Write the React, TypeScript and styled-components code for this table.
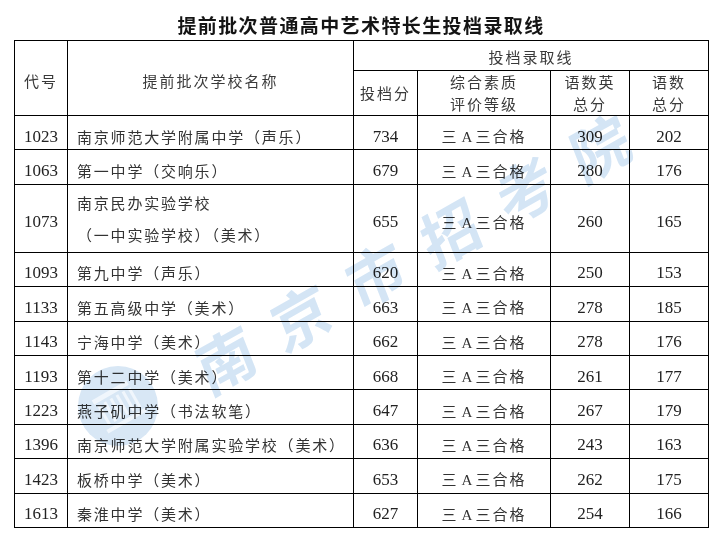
import styled, { createGlobalStyle } from "styled-components";

const GlobalStyle = createGlobalStyle`
  html, body {
    margin: 0;
    padding: 0;
    background: #fff;
  }
  body {
    font-family: "Liberation Serif", "Noto Sans CJK SC", serif;
    color: #2a2a2a;
  }
`;

const Page = styled.div`
  position: relative;
  width: 727px;
  height: 541px;
  padding-left: 14px;
  box-sizing: border-box;
  overflow: hidden;
`;

const Title = styled.h1`
  margin: 0;
  width: 694px;
  height: 40px;
  box-sizing: border-box;
  padding-top: 11px;
  line-height: 28px;
  text-align: center;
  font-family: "Noto Sans CJK SC", sans-serif;
  font-weight: 700;
  font-size: 19px;
  letter-spacing: 1.4px;
  color: #141414;
`;

const Table = styled.table`
  width: 695px;
  border-collapse: collapse;
  table-layout: fixed;
`;

const HeadRow = styled.tr<{ $h: number }>`
  height: ${(p) => p.$h}px;
`;

const Row = styled.tr<{ $double?: boolean }>`
  height: ${(p) => (p.$double ? 68 : 34.4)}px;
`;

const HeadCell = styled.th<{ $shift?: number }>`
  border: 1px solid #000;
  padding: ${(p) => p.$shift ?? 0}px 0 0;
  font-family: "Noto Sans CJK SC", sans-serif;
  font-weight: 400;
  font-size: 15px;
  line-height: 22px;
  letter-spacing: 2px;
  color: #3a3a3a;
  text-align: center;
  vertical-align: middle;
`;

const NumCell = styled.td`
  border: 1px solid #000;
  padding: 8px 0 0;
  font-family: "Liberation Serif", serif;
  font-size: 17px;
  line-height: 20px;
  color: #222;
  text-align: center;
  vertical-align: middle;
`;

const NameCell = styled.td<{ $lines?: number }>`
  border: 1px solid #000;
  padding: ${(p) => ((p.$lines ?? 1) > 1 ? 2 : 8)}px 0 0 9px;
  font-family: "Noto Sans CJK SC", sans-serif;
  font-size: 15px;
  line-height: ${(p) => ((p.$lines ?? 1) > 1 ? 32 : 20)}px;
  letter-spacing: 1.8px;
  color: #333;
  text-align: left;
  vertical-align: middle;
  white-space: nowrap;
`;

const GradeCell = styled.td`
  border: 1px solid #000;
  padding: 8px 0 0;
  font-family: "Noto Sans CJK SC", sans-serif;
  font-size: 15px;
  line-height: 20px;
  letter-spacing: 2px;
  color: #333;
  text-align: center;
  vertical-align: middle;
  white-space: nowrap;
`;

const Latin = styled.span`
  font-family: "Liberation Serif", serif;
  letter-spacing: 0;
  margin: 0 3px;
`;

const Watermark = styled.div`
  position: absolute;
  inset: 0;
  pointer-events: none;
  mix-blend-mode: multiply;
`;

const WatermarkText = styled.div`
  position: absolute;
  left: 195px;
  top: 326px;
  font-family: "Noto Sans CJK SC", sans-serif;
  font-weight: 700;
  font-size: 60px;
  line-height: 62px;
  letter-spacing: 26px;
  white-space: nowrap;
  color: #d4e5f5;
  transform-origin: 30px 31px;
  transform: rotate(-29.5deg) skewX(-8deg);
`;

const Logo = styled.svg`
  position: absolute;
  left: 76px;
  top: 364px;
`;

type Entry = {
  code: string;
  name: string[];
  score: string;
  three: string;
  two: string;
};

const entries: Entry[] = [
  { code: "1023", name: ["南京师范大学附属中学（声乐）"], score: "734", three: "309", two: "202" },
  { code: "1063", name: ["第一中学（交响乐）"], score: "679", three: "280", two: "176" },
  { code: "1073", name: ["南京民办实验学校", "（一中实验学校）（美术）"], score: "655", three: "260", two: "165" },
  { code: "1093", name: ["第九中学（声乐）"], score: "620", three: "250", two: "153" },
  { code: "1133", name: ["第五高级中学（美术）"], score: "663", three: "278", two: "185" },
  { code: "1143", name: ["宁海中学（美术）"], score: "662", three: "278", two: "176" },
  { code: "1193", name: ["第十二中学（美术）"], score: "668", three: "261", two: "177" },
  { code: "1223", name: ["燕子矶中学（书法软笔）"], score: "647", three: "267", two: "179" },
  { code: "1396", name: ["南京师范大学附属实验学校（美术）"], score: "636", three: "243", two: "163" },
  { code: "1423", name: ["板桥中学（美术）"], score: "653", three: "262", two: "175" },
  { code: "1613", name: ["秦淮中学（美术）"], score: "627", three: "254", two: "166" },
];

function App() {
  return (
    <>
      <GlobalStyle />
      <Page>
        <Title>提前批次普通高中艺术特长生投档录取线</Title>
        <Table>
          <colgroup>
            <col style={{ width: 53 }} />
            <col style={{ width: 286 }} />
            <col style={{ width: 64 }} />
            <col style={{ width: 133 }} />
            <col style={{ width: 79 }} />
            <col style={{ width: 79 }} />
          </colgroup>
          <thead>
            <HeadRow $h={30}>
              <HeadCell rowSpan={2} $shift={6}>代号</HeadCell>
              <HeadCell rowSpan={2} $shift={6}>提前批次学校名称</HeadCell>
              <HeadCell colSpan={4} $shift={3}>投档录取线</HeadCell>
            </HeadRow>
            <HeadRow $h={44}>
              <HeadCell>投档分</HeadCell>
              <HeadCell>
                综合素质
                <br />
                评价等级
              </HeadCell>
              <HeadCell>
                语数英
                <br />
                总分
              </HeadCell>
              <HeadCell>
                语数
                <br />
                总分
              </HeadCell>
            </HeadRow>
          </thead>
          <tbody>
            {entries.map((e) => (
              <Row key={e.code} $double={e.name.length > 1}>
                <NumCell>{e.code}</NumCell>
                <NameCell $lines={e.name.length}>
                  {e.name.map((line, i) => (
                    <div key={i}>{line}</div>
                  ))}
                </NameCell>
                <NumCell>{e.score}</NumCell>
                <GradeCell>
                  三<Latin>A</Latin>三合格
                </GradeCell>
                <NumCell>{e.three}</NumCell>
                <NumCell>{e.two}</NumCell>
              </Row>
            ))}
          </tbody>
        </Table>
        <Watermark>
          <Logo width="84" height="84" viewBox="0 0 84 84">
            <circle cx="42" cy="42" r="40" fill="#d8e7f5" />
            <g transform="rotate(-30 42 42)" fill="#f0f6fc">
              <rect x="22" y="24" width="40" height="5" />
              <rect x="24" y="32" width="3" height="22" />
              <rect x="31" y="32" width="3" height="22" />
              <rect x="38" y="32" width="3" height="22" />
              <rect x="45" y="32" width="3" height="22" />
              <rect x="52" y="32" width="3" height="22" />
              <rect x="59" y="32" width="3" height="22" />
              <rect x="20" y="57" width="44" height="4" />
            </g>
          </Logo>
          <WatermarkText>南京市招考院</WatermarkText>
        </Watermark>
      </Page>
    </>
  );
}

export default App;
